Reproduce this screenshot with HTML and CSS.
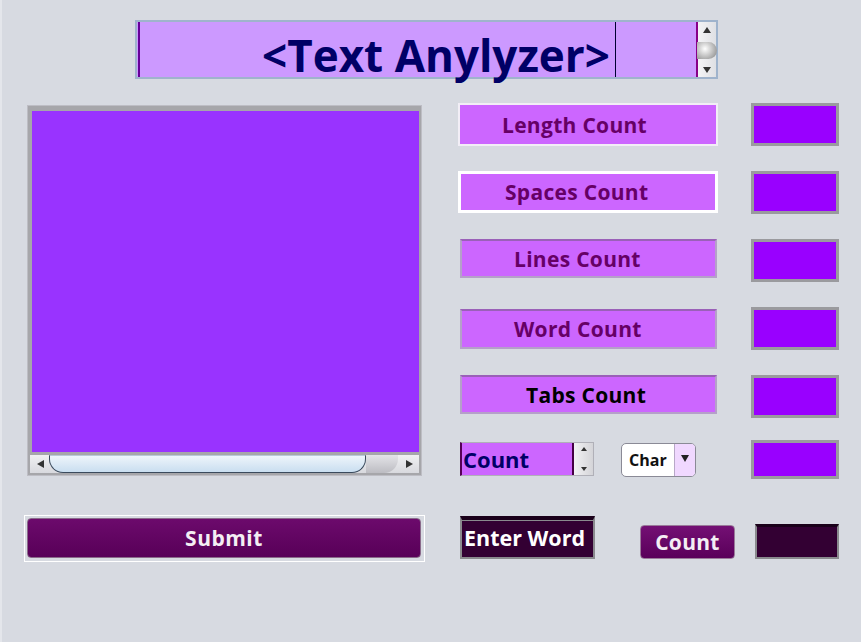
FILE: index.html
```html
<!DOCTYPE html>
<html>
<head>
<meta charset="utf-8">
<link rel="stylesheet" href="styles.css">
</head>
<body>
<div class="window">
  <div class="title-row">
    <div class="title-box">
      <div class="title-field">
        <span class="title-text">&lt;Text Anylyzer&gt;</span>
        <span class="caret"></span>
      </div>
      <div class="vscroll">
        <svg class="arr" width="10" height="8" viewBox="0 0 10 8"><path d="M5 1 L9 7 L1 7 Z" fill="#333"/></svg>
        <span class="vthumb"></span>
        <svg class="arr" width="10" height="8" viewBox="0 0 10 8"><path d="M1 1 L9 1 L5 7 Z" fill="#333"/></svg>
      </div>
    </div>
  </div>

  <div class="main">
    <div class="left">
      <div class="textarea">
        <div class="textarea-inner"></div>
        <div class="hscroll">
          <div class="hbtn"><svg width="10" height="10" viewBox="0 0 10 10"><path d="M2 5 L9 1 L9 9 Z" fill="#333"/></svg></div>
          <div class="htrack">
            <div class="hthumb"></div>
            <div class="hend"></div>
          </div>
          <div class="hbtn"><svg width="10" height="10" viewBox="0 0 10 10"><path d="M1 1 L8 5 L1 9 Z" fill="#333"/></svg></div>
        </div>
      </div>
      <div class="submit-wrap">
        <button class="btn submit">Submit</button>
      </div>
    </div>

    <div class="grid">
      <div class="label lbl-1 first"><span>Length Count</span></div>
      <div class="val"></div>

      <div class="label lbl-2 second"><span>Spaces Count</span></div>
      <div class="val"></div>

      <div class="label lbl-3"><span>Lines Count</span></div>
      <div class="val"></div>

      <div class="label lbl-4"><span>Word Count</span></div>
      <div class="val"></div>

      <div class="label lbl-5 black"><span>Tabs Count</span></div>
      <div class="val"></div>

      <div class="row6">
        <div class="spinner">
          <span class="spin-text">Count</span>
          <div class="spin-btns">
            <svg width="10" height="8" viewBox="0 0 10 8"><path d="M5 2 L8 6 L2 6 Z" fill="#333"/></svg>
            <svg width="10" height="8" viewBox="0 0 10 8"><path d="M2 2 L8 2 L5 6 Z" fill="#333"/></svg>
          </div>
        </div>
        <div class="combo">
          <span class="combo-text">Char</span>
          <span class="combo-arrow"><svg width="10" height="10" viewBox="0 0 10 10"><path d="M1 2 L9 2 L5 9 Z" fill="#222"/></svg></span>
        </div>
      </div>
      <div class="val val6"></div>

      <div class="row7">
        <div class="enter-word">Enter Word</div>
        <button class="btn count-btn">Count</button>
      </div>
      <div class="val dark"></div>
    </div>
  </div>
</div>
</body>
</html>
```

FILE: styles.css
```css
html, body {
  margin: 0;
  padding: 0;
}
body {
  background: #d7dae1;
  font-family: "Open Sans", "Noto Sans", sans-serif;
  font-weight: 700;
}
.window {
  width: 861px;
  height: 642px;
  box-sizing: border-box;
  border-left: 2px solid #e4e6eb;
}
.title-row {
  padding: 20px 0 0 133px;
  height: 81px;
  box-sizing: border-box;
}
.title-box {
  width: 583px;
  height: 59px;
  box-sizing: border-box;
  border: 2px solid #9fb3cc;
  background: #cc99ff;
  display: flex;
}
.title-field {
  flex: 1;
  border-left: 2px solid #660099;
  margin-left: 1px;
  display: flex;
  align-items: center;
  justify-content: flex-end;
  padding-right: 80px;
}
.title-text {
  font-size: 44px;
  color: #000066;
  line-height: 1;
  margin-top: 10px;
}
.caret {
  width: 1px;
  height: 55px;
  background: #000033;
  margin-left: 5px;
}
.vscroll {
  width: 20px;
  border-left: 2px solid #880088;
  background: linear-gradient(to right, #f4f4f6, #dfe0e4);
  display: flex;
  flex-direction: column;
  align-items: center;
  justify-content: space-between;
  padding: 4px 0 3px;
  box-sizing: border-box;
}
.vthumb {
  width: 20px;
  height: 17px;
  background: radial-gradient(circle at 40% 40%, #ffffff, #9a9a9a 80%);
  border-radius: 0 10px 10px 0;
}
.main {
  display: flex;
  padding-top: 22px;
}
.left {
  margin-left: 25px;
  width: 401px;
}
.textarea {
  width: 395px;
  height: 371px;
  margin-top: 2px;
  box-sizing: border-box;
  background: #a6a6aa;
  border: 1px solid #bdbdc4;
  padding: 5px 2px 2px 4px;
  display: flex;
  flex-direction: column;
}
.textarea-inner {
  flex: 1;
  background: #9933ff;
}
.hscroll {
  height: 18px;
  margin-top: 3px;
  margin-left: -2px;
  display: flex;
  background: linear-gradient(#f0f0f2, #d8d9de);
}
.hbtn {
  width: 19px;
  display: flex;
  align-items: center;
  justify-content: center;
}
.htrack {
  flex: 1;
  display: flex;
}
.hthumb {
  width: 317px;
  height: 18px;
  box-sizing: border-box;
  background: linear-gradient(#eef5fb, #c9def0);
  border: 1px solid #3a4a5c;
  border-top-color: #b8c8d8;
  border-radius: 0 0 14px 14px;
}
.hend {
  width: 32px;
  height: 18px;
  border-radius: 0 0 14px 0;
  background: linear-gradient(#e4e4e8, #bcbcc2);
}
.submit-wrap {
  margin-top: 39px;
  margin-left: -3px;
  width: 401px;
  height: 47px;
  box-sizing: border-box;
  border: 1px solid #ffffff;
  padding: 2px 3px 3px 2px;
}
.btn {
  font-family: "Open Sans", "Noto Sans", sans-serif;
  font-weight: 700;
  color: #f4eef4;
  cursor: pointer;
}
.submit {
  width: 100%;
  height: 100%;
  border: 1px solid #8a6a8a;
  border-radius: 4px;
  background: linear-gradient(#6c0a6c, #580058);
  font-size: 21px;
  padding: 0;
  letter-spacing: 0.5px;
}
.grid {
  margin-left: 30px;
  display: grid;
  grid-template-columns: 260px 88px;
  column-gap: 33px;
  grid-template-rows: 68px 68px 68px 68px 65px 76px 44px;
  align-items: start;
}
.label {
  box-sizing: border-box;
  background: #cc66ff;
  color: #660066;
  font-size: 21px;
  display: flex;
  align-items: center;
  height: 43px;
  border: 2px solid #b5a0c9;
  border-top-color: #9a60b8;
}
.label.first {
  border: 2px solid #f2eef6;
}
.label.second {
  border: 3px solid #ffffff;
  height: 42px;
}
.lbl-1 { padding-left: 42px; }
.lbl-2 { padding-left: 44px; }
.lbl-3 { padding-left: 52px; margin-left: 2px; width: 257px; height: 39px; }
.lbl-4 { padding-left: 52px; margin-left: 2px; width: 257px; height: 40px; margin-top: 2px; }
.lbl-5 { padding-left: 64px; margin-left: 2px; width: 257px; height: 39px; }
.label span { letter-spacing: 0.3px; }
.black { color: #000000; }
.val {
  width: 88px;
  height: 43px;
  box-sizing: border-box;
  border: 3px solid #9a9a9e;
  background: #9900ff;
}
.val6 { height: 39px; }
.val.dark {
  width: 84px;
  margin-left: 4px;
  margin-top: 8px;
  height: 35px;
  background: #330033;
  border: 2px solid #8a8a8e;
  border-top: 3px solid #1a001a;
}
.row6 {
  display: flex;
  align-items: flex-start;
  padding-top: 2px;
  margin-left: 2px;
}
.spinner {
  width: 134px;
  height: 34px;
  flex-shrink: 0;
  box-sizing: border-box;
  display: flex;
  border: 1px solid #b0b0b8;
  border-left: 2px solid #550055;
  background: #cc66ff;
}
.spin-text {
  flex: 1;
  color: #000066;
  font-size: 22px;
  display: flex;
  align-items: center;
  padding-left: 1px;
  border-right: 2px solid #440044;
}
.spin-btns {
  width: 19px;
  background: linear-gradient(to right, #f2f2f4, #d4d4d8);
  display: flex;
  flex-direction: column;
  justify-content: space-between;
  align-items: center;
  padding: 2px 0;
}
.combo {
  margin-left: 27px;
  margin-top: 1px;
  width: 75px;
  height: 34px;
  flex-shrink: 0;
  box-sizing: border-box;
  border: 1px solid #8a8a96;
  border-radius: 5px;
  background: #ffffff;
  display: flex;
  overflow: hidden;
}
.combo-text {
  flex: 1;
  font-size: 16px;
  color: #111;
  display: flex;
  align-items: center;
  padding-left: 7px;
}
.combo-arrow {
  width: 20px;
  background: #f0d8ff;
  border-left: 1px solid #b8a8c8;
  display: flex;
  align-items: center;
  justify-content: center;
  padding-bottom: 4px;
}
.row7 {
  display: flex;
  align-items: flex-start;
  margin-left: 2px;
}
.enter-word {
  width: 135px;
  height: 43px;
  flex-shrink: 0;
  box-sizing: border-box;
  background: #330033;
  border: 2px solid #8a8a8e;
  border-top: 4px solid #1a001a;
  box-shadow: inset 0 1px 0 #8a8a8e;
  color: #ffffff;
  font-size: 21.5px;
  display: flex;
  align-items: center;
  padding-left: 2px;
  padding-bottom: 2px;
  white-space: nowrap;
}
.count-btn {
  margin-left: 45px;
  margin-top: 9px;
  width: 95px;
  height: 34px;
  flex-shrink: 0;
  border: 1px solid #9a7a9a;
  border-radius: 4px;
  background: linear-gradient(#741074, #5a005a);
  font-size: 21px;
  letter-spacing: 0.3px;
  padding: 0;
}
```
